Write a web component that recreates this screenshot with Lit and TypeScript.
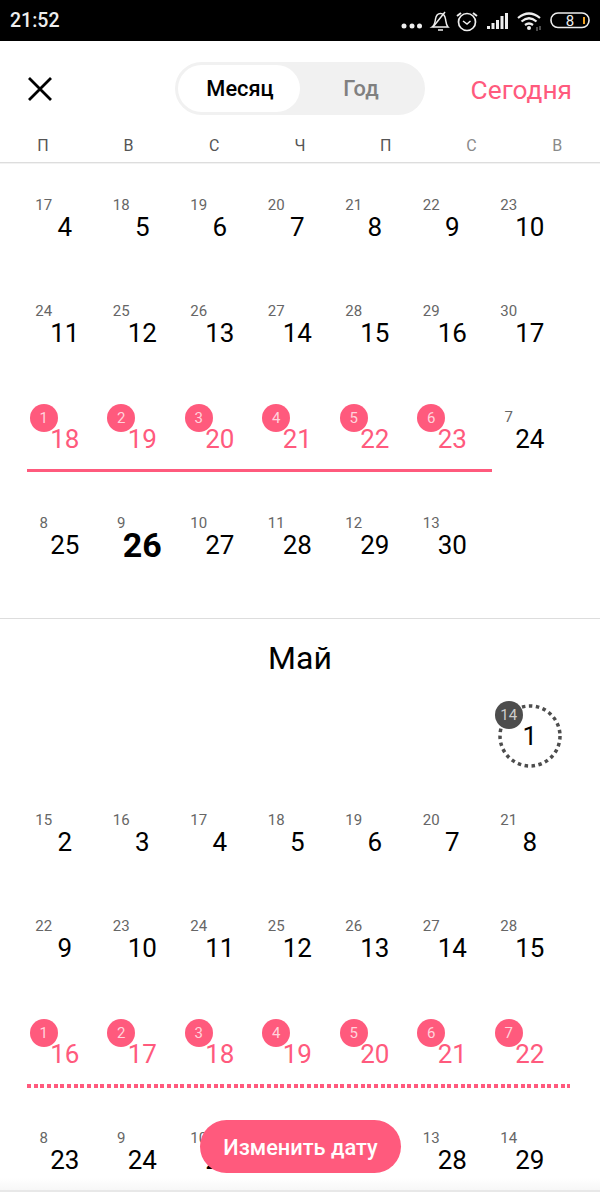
import { LitElement, css, html } from "lit";
import { customElement } from "lit/decorators.js";

type Day = { sub: number; num: number };

const week = (subStart: number, numStart: number, count = 7): Day[] =>
  Array.from({ length: count }, (_, i) => ({ sub: subStart + i, num: numStart + i }));

@customElement("app-root")
export class AppRoot extends LitElement {
  static styles = css`
    :host {
      display: block;
      width: 600px;
      height: 1200px;
      position: relative;
      overflow: hidden;
      background: #fff;
      font-family: Roboto, "Noto Sans", sans-serif;
      color: #000;
    }
    .status {
      height: 41px;
      background: #000;
      display: flex;
      align-items: center;
      justify-content: space-between;
      padding: 0 10px;
      color: #eee;
      box-sizing: border-box;
    }
    .time {
      font-size: 19.5px;
      font-weight: 500;
    }
    .status svg {
      display: block;
    }
    .topbar {
      height: 81px;
      display: grid;
      grid-template-columns: 175px 250px 1fr;
      align-items: center;
      box-sizing: border-box;
      padding-top: 14px;
    }
    .close {
      margin-left: 27px;
      display: block;
    }
    .toggle {
      height: 53px;
      border-radius: 27px;
      background: #f1f1f1;
      display: flex;
      padding: 3px;
      box-sizing: border-box;
    }
    .toggle span {
      display: flex;
      align-items: center;
      justify-content: center;
      font-size: 21.8px;
      font-weight: 500;
      color: #808080;
    }
    .toggle .on {
      width: 122px;
      padding-left: 2px;
      box-sizing: border-box;
      background: #fff;
      border-radius: 24px;
      color: #000;
    }
    .toggle .off {
      flex: 1;
    }
    .today {
      font-size: 26.3px;
      color: #ff5a7d;
      text-align: right;
      padding: 2px 28px 0 0;
    }
    .weekdays {
      height: 41px;
      box-sizing: border-box;
      padding-top: 7px;
      display: grid;
      grid-template-columns: repeat(7, 1fr);
      align-items: center;
      text-align: center;
      font-size: 16px;
      color: #555;
      border-bottom: 1px solid #ddd;
      box-shadow: 0 1px 0 #f2f2f2;
    }
    .weekdays .rest {
      color: #8a8a8a;
    }
    .april {
      height: 456px;
      padding-top: 11px;
      box-sizing: border-box;
      border-bottom: 1px solid #ddd;
    }
    .title {
      height: 64px;
      box-sizing: border-box;
      padding-top: 18px;
      text-align: center;
      font-size: 32px;
      line-height: 42px;
    }
    .row {
      display: grid;
      grid-template-columns: repeat(7, 77.5px);
      align-content: start;
      height: 106px;
      margin-left: 27px;
    }
    .cell {
      display: flex;
      flex-direction: column;
      align-items: center;
      padding: 16px 2px 0 0;
      box-sizing: border-box;
    }
    .sub {
      width: 28px;
      height: 28px;
      margin-right: 42px;
      padding-top: 2px;
      box-sizing: border-box;
      display: flex;
      align-items: center;
      justify-content: center;
      font-size: 15px;
      color: #666;
      flex: none;
    }
    .num {
      font-size: 26px;
      line-height: 30px;
      margin-top: -6px;
    }
    .num.bold {
      font-size: 34px;
      font-weight: 700;
    }
    .badge {
      background: #ff5a7d;
      color: #ffd3dc;
      border-radius: 50%;
      padding-top: 0;
      margin: 2px 42px -2px 0;
    }
    .accent .num {
      color: #ff5a7d;
    }
    .line {
      grid-column: 1 / 7;
      height: 3px;
      margin-top: 15px;
      background: #ff5a7d;
    }
    .line.dotted {
      grid-column: 1 / -1;
      height: 4px;
      background: repeating-linear-gradient(90deg, #ff5a7d 0 4px, transparent 4px 6.67px);
    }
    .first {
      grid-column: 7;
      position: relative;
    }
    .ring {
      position: absolute;
      left: 6px;
      top: 21px;
    }
    .first .sub {
      position: relative;
      padding-top: 0;
      background: #4d4d4d;
      color: #ccc;
      border-radius: 50%;
      margin: 2px 42px -2px 0;
    }
    .first .num {
      position: relative;
    }
    .fab {
      position: absolute;
      left: 200px;
      top: 1120px;
      width: 201px;
      height: 53px;
      padding-top: 1px;
      box-sizing: border-box;
      border-radius: 27px;
      background: #ff5a7d;
      color: #fff;
      display: flex;
      align-items: center;
      justify-content: center;
      font-size: 21.8px;
      font-weight: 500;
    }
    .bottom {
      position: absolute;
      left: 0;
      right: 0;
      top: 1178px;
      height: 14px;
      background: linear-gradient(#fff 0, #f7f7f7 12px, #e8e8e8 12px);
    }
  `;

  private renderCell(d: Day, accent = false, bold = false) {
    return html`
      <div class="cell ${accent ? "accent" : ""}">
        <div class="sub ${accent ? "badge" : ""}">${d.sub}</div>
        <div class="num ${bold ? "bold" : ""}">${d.num}</div>
      </div>
    `;
  }

  private renderStatusIcons() {
    return html`
      <svg width="200" height="41" viewBox="390 0 200 41" fill="none" stroke="#eee">
        <g fill="#eee" stroke="none">
          <circle cx="404" cy="26" r="2.500" />
          <circle cx="412" cy="26" r="2.500" />
          <circle cx="419.500" cy="26" r="2.500" />
        </g>
        <path d="M432 27c3-2 3-5 3.500-8 .5-3 2.500-5.500 5-5.500s4.500 2.500 5 5.500c.5 3 .5 6 2.500 8z" stroke-width="1.500" />
        <path d="M438 30h5M433 27 445 12" stroke-width="1.500" />
        <circle cx="467" cy="22" r="8.500" stroke-width="1.700" />
        <path d="M463 21l4 3 3.500-3" stroke-width="1.500" />
        <path d="M457 16l4-3M477 16l-4-3" stroke-width="2" />
        <g fill="#eee" stroke="none">
          <rect x="487" y="26" width="3" height="3" />
          <rect x="491.500" y="23" width="3" height="6" />
          <rect x="496" y="20" width="3" height="9" />
          <rect x="500.500" y="16" width="3" height="13" />
          <rect x="505" y="13" width="3" height="16" />
        </g>
        <path d="M518 18Q529 9 540 18M521.500 21.500Q529 15 536.500 21.500M525 25Q529 22 533 25" stroke-width="2.200" />
        <circle cx="529" cy="28" r="2" fill="#eee" stroke="none" />
        <path d="M537 27v4M540 26v4" stroke-width="1" stroke="#999" />
        <rect x="551" y="13" width="38" height="14.500" rx="7" stroke-width="1.600" />
        <rect x="583" y="17" width="2" height="7" fill="#f5a623" stroke="none" />
        <text x="570" y="25.500" font-size="15" font-family="Roboto" fill="#eee" stroke="none" text-anchor="middle">8</text>
      </svg>
    `;
  }

  render() {
    return html`
      <div class="status">
        <span class="time">21:52</span>
        ${this.renderStatusIcons()}
      </div>
      <div class="topbar">
        <svg class="close" width="26" height="26" viewBox="0 0 26 26" stroke="#000" stroke-width="2.800" fill="none">
          <path d="M2 2l22 22M24 2L2 24" />
        </svg>
        <div class="toggle">
          <span class="on">Месяц</span>
          <span class="off">Год</span>
        </div>
        <div class="today">Сегодня</div>
      </div>
      <div class="weekdays">
        <span>П</span><span>В</span><span>С</span><span>Ч</span><span>П</span>
        <span class="rest">С</span><span class="rest">В</span>
      </div>
      <div class="april">
        <div class="row">${week(17, 4).map((d) => this.renderCell(d))}</div>
        <div class="row">${week(24, 11).map((d) => this.renderCell(d))}</div>
        <div class="row">
          ${week(1, 18, 6).map((d) => this.renderCell(d, true))}
          ${this.renderCell({ sub: 7, num: 24 })}
          <div class="line"></div>
        </div>
        <div class="row">${week(8, 25, 6).map((d) => this.renderCell(d, false, d.num === 26))}</div>
      </div>
      <div class="title">Май</div>
      <div class="row">
        <div class="cell first">
          <svg class="ring" width="64" height="64" viewBox="0 0 64 64" fill="none">
            <circle cx="32" cy="32" r="30" stroke="#4d4d4d" stroke-width="3.500" stroke-dasharray="3.500 3.500" />
          </svg>
          <div class="sub">14</div>
          <div class="num">1</div>
        </div>
      </div>
      <div class="row">${week(15, 2).map((d) => this.renderCell(d))}</div>
      <div class="row">${week(22, 9).map((d) => this.renderCell(d))}</div>
      <div class="row">
        ${week(1, 16).map((d) => this.renderCell(d, true))}
        <div class="line dotted"></div>
      </div>
      <div class="row">${week(8, 23).map((d) => this.renderCell(d))}</div>
      <div class="bottom"></div>
      <div class="fab">Изменить дату</div>
    `;
  }
}
